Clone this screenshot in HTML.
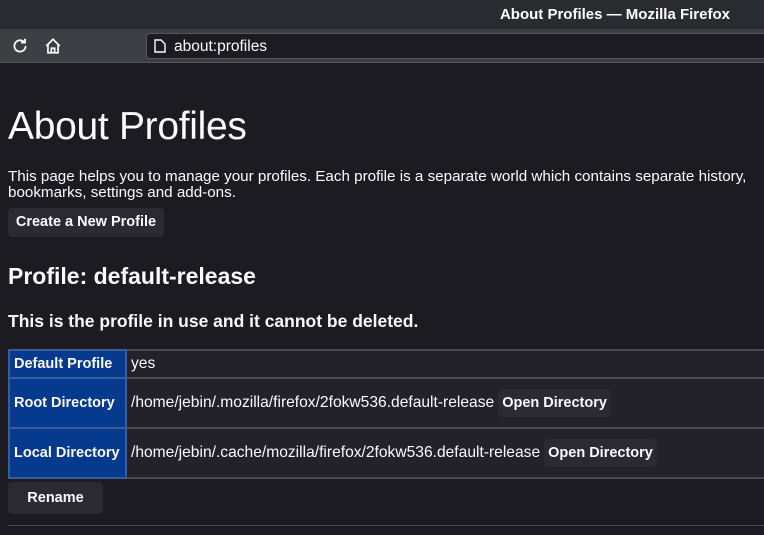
<!DOCTYPE html>
<html><head><style>
*{margin:0;padding:0;box-sizing:border-box}
body{width:764px;height:535px;overflow:hidden;background:#1c1b22;color:#fbfbfe;font-family:"Liberation Sans",sans-serif;position:relative}
.tb{position:absolute;left:0;top:0;width:764px;height:29px;background:#2a2b30}
.tb span{position:absolute;right:34px;top:6px;font-weight:bold;font-size:15px;color:#fff}
.tool{position:absolute;left:0;top:29px;width:764px;height:34px;background:#3e3f44;border-bottom:1px solid #555}
.url{position:absolute;left:146px;top:4px;width:630px;height:26px;background:#1c1b22;border-radius:4px;border:1px solid #555}
.url span{position:absolute;left:27px;top:4px;font-size:15.5px;color:#fbfbfe}
.abs{position:absolute}
h1{position:absolute;left:8px;top:105px;font-size:39px;font-weight:300;font-family:"Liberation Sans",sans-serif;letter-spacing:-0.3px}
p{position:absolute;left:8px;top:169px;font-size:15.2px;line-height:16px;width:756px}
.btn{position:absolute;background:#2b2a33;border-radius:4px;font-weight:bold;font-size:14.5px;color:#fbfbfe;text-align:center}
h2{position:absolute;left:8px;top:263px;font-size:23px}
h3{position:absolute;left:8px;top:311px;font-size:17.5px}
table{position:absolute;left:8px;top:349px;border-collapse:collapse;width:770px;font-size:15.6px}
td{border:2px solid #4a4a50;padding:0 4px;background:#23222a}
td.h{background:#063a8f;border-color:#3a5d9a;font-weight:bold;width:117px;white-space:nowrap;font-size:14.5px;padding:0 4px}
td .ob{display:inline-block;background:#2b2a33;border-radius:4px;font-weight:bold;padding:6px 4px;margin-left:4px;font-size:14.5px}
hr{position:absolute;left:8px;top:525px;width:756px;border:0;border-top:1px solid #4a4a50}
</style></head><body>
<div class="tb"><span>About Profiles — Mozilla Firefox</span></div>
<div class="tool">
<svg class="abs" style="left:11px;top:8px" width="18" height="18" viewBox="0 0 16 16" fill="none" stroke="#fbfbfe" stroke-width="1.6"><path d="M13 8a5 5 0 1 1-1.5-3.6"/><path d="M12.5 1.5v3.5H9" fill="none"/></svg>
<svg class="abs" style="left:44px;top:8px" width="18" height="18" viewBox="0 0 16 16" fill="none" stroke="#fbfbfe" stroke-width="1.5"><path d="M2 8L8 2l6 6M3.5 7v7h9V7M6.5 14v-4h3v4"/></svg>
<div class="url"><svg class="abs" style="left:7px;top:5px" width="12" height="14" viewBox="0 0 12 14" fill="none" stroke="#fbfbfe" stroke-width="1.4"><path d="M1 1h6l4 4v8H1z"/></svg><span>about:profiles</span></div>
</div>
<h1>About Profiles</h1>
<p>This page helps you to manage your profiles. Each profile is a separate world which contains separate history, bookmarks, settings and add-ons.</p>
<div class="btn" style="left:8px;top:208px;width:156px;height:29px;line-height:29px">Create a New Profile</div>
<h2>Profile: default-release</h2>
<h3>This is the profile in use and it cannot be deleted.</h3>
<table>
<tr style="height:28px"><td class="h">Default Profile</td><td>yes</td></tr>
<tr style="height:50px"><td class="h">Root Directory</td><td>/home/jebin/.mozilla/firefox/2fokw536.default-release<span class="ob">Open Directory</span></td></tr>
<tr style="height:50px"><td class="h">Local Directory</td><td>/home/jebin/.cache/mozilla/firefox/2fokw536.default-release<span class="ob">Open Directory</span></td></tr>
</table>
<div class="btn" style="left:8px;top:482px;width:95px;height:32px;line-height:32px">Rename</div>
<hr>
</body></html>
